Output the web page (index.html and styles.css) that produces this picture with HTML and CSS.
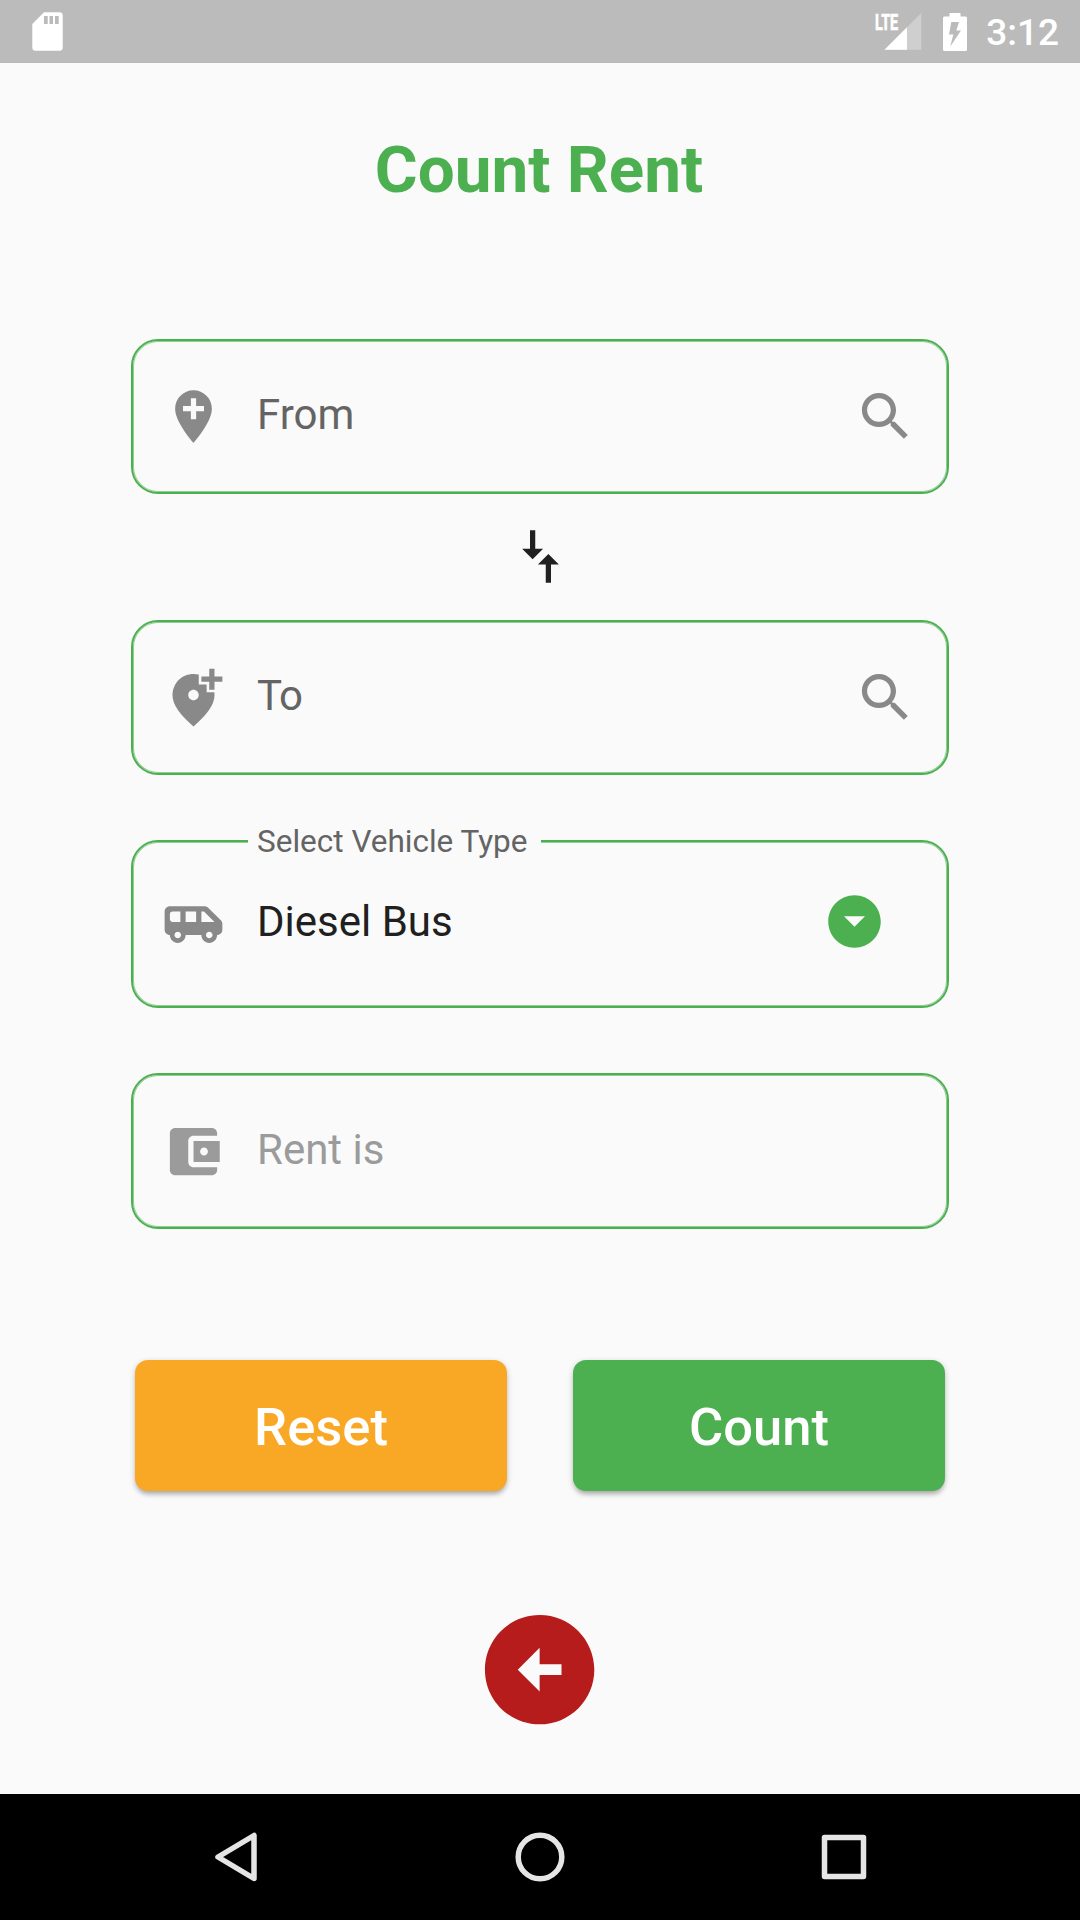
FILE: index.html
```html
<!DOCTYPE html>
<html lang="en">
<head>
<meta charset="utf-8">
<title>Count Rent</title>
<link rel="stylesheet" href="styles.css">
</head>
<body>
<div class="screen">
  <header class="status-bar">
    <svg class="sd-card" viewBox="0 0 31 39"><path fill-rule="evenodd" d="M12 .3H27.500Q30.700.3 30.700 3.500V35.500Q30.700 38.700 27.500 38.700H3.500Q.3 38.700.3 35.500V12ZM12 4V12H15.700V4ZM17.500 4V12H21V4ZM23 4V12H26.700V4Z"/></svg>
    <div class="status-right">
      <div class="signal">
        <svg viewBox="0 0 38 37"><path opacity=".3" d="M37.300 0V36.700H.5Z"/><path d="M23 14.300V36.700H.5Z"/></svg>
        <span class="network">LTE</span>
      </div>
      <svg class="battery" viewBox="0 0 24 38"><path fill-rule="evenodd" d="M6.500 0H17.500V3.500H22.500Q24 3.500 24 5V36.500Q24 38 22.500 38H1.500Q0 38 0 36.500V5Q0 3.500 1.500 3.500H6.500ZM8.300 9 6 21.500H10.300L7.300 33.500 18 17.500H13.300L16 9Z"/></svg>
      <span class="clock">3:12</span>
    </div>
  </header>

  <main class="content">
    <h1 class="title">Count Rent</h1>

    <div class="field">
      <svg class="icon" viewBox="0 0 24 24"><path d="M12 2C8.140 2 5 5.140 5 9c0 5.250 7 13 7 13s7-7.750 7-13c0-3.860-3.140-7-7-7zm4 8h-3v3h-2v-3H8V8h3V5h2v3h3v2z"/></svg>
      <span class="text">From</span>
      <svg class="icon" viewBox="0 0 24 24"><path d="M15.500 14h-.79l-.28-.27C15.410 12.590 16 11.110 16 9.500 16 5.910 13.090 3 9.500 3S3 5.910 3 9.500 5.910 16 9.500 16c1.610 0 3.090-.59 4.230-1.570l.27.28v.79l5 4.990L20.490 19l-4.990-5zm-6 0C7.010 14 5 11.990 5 9.500S7.010 5 9.500 5 14 7.010 14 9.500 11.990 14 9.500 14z"/></svg>
    </div>

    <div class="swap">
      <svg class="icon dark" viewBox="0 0 24 24"><path d="M8 2h2v7h3l-4 4-4-4h3zM14 22h2v-7h3l-4-4-4 4h3z"/></svg>
    </div>

    <div class="field">
      <svg class="icon" viewBox="0 0 24 24"><path fill-rule="evenodd" d="M20 1v3h3v2h-3v3h-2V6h-3V4h3V1H20zM12 13c1.100 0 2-.9 2-2s-.9-2-2-2-2 .9-2 2S10.900 13 12 13zM14 3.250V7h3v3h2.920C19.970 10.390 20 10.790 20 11.200c0 3.320-2.670 7.250-8 11.800-5.330-4.550-8-8.480-8-11.800C4 6.220 7.800 3 12 3 12.680 3 13.350 3.080 14 3.250z"/></svg>
      <span class="text to">To</span>
      <svg class="icon" viewBox="0 0 24 24"><path d="M15.500 14h-.79l-.28-.27C15.410 12.590 16 11.110 16 9.500 16 5.910 13.090 3 9.500 3S3 5.910 3 9.500 5.910 16 9.500 16c1.610 0 3.090-.59 4.230-1.570l.27.28v.79l5 4.990L20.490 19l-4.990-5zm-6 0C7.010 14 5 11.990 5 9.500S7.010 5 9.500 5 14 7.010 14 9.500 11.990 14 9.500 14z"/></svg>
    </div>

    <div class="field select">
      <span class="floating-label">Select Vehicle Type</span>
      <svg class="icon" viewBox="0 0 24 24"><path d="M22.410 10.410l-4.830-4.830c-.37-.37-.88-.58-1.410-.58H3c-1.100 0-2 .89-2 2v7c0 1.100.9 2 2 2 0 1.660 1.340 3 3 3s3-1.340 3-3h6c0 1.660 1.340 3 3 3s3-1.340 3-3c1.100 0 2-.9 2-2v-2.170c0-.53-.21-1.040-.59-1.420zM3 10V8c0-.55.45-1 1-1h3v4H4c-.55 0-1-.45-1-1zm3 7.250c-.69 0-1.250-.56-1.250-1.250S5.310 14.750 6 14.750s1.250.56 1.250 1.250S6.690 17.250 6 17.250zM13 11H9V7h4v4zm5 6.250c-.69 0-1.250-.56-1.250-1.250s.56-1.250 1.250-1.250 1.250.56 1.250 1.250-.56 1.250-1.250 1.250zM15 11V7h1l4 4h-5z"/></svg>
      <span class="text value">Diesel Bus</span>
      <svg class="icon dropdown" viewBox="0 0 24 24"><path d="M12 2C6.480 2 2 6.480 2 12s4.480 10 10 10 10-4.480 10-10S17.520 2 12 2zm0 12l-4-4h8l-4 4z"/></svg>
    </div>

    <div class="field disabled">
      <svg class="icon" viewBox="0 0 24 24"><path d="M21 18v1c0 1.100-.9 2-2 2H5c-1.110 0-2-.9-2-2V5c0-1.100.89-2 2-2h14c1.100 0 2 .9 2 2v1h-9c-1.110 0-2 .9-2 2v8c0 1.100.89 2 2 2h9zm-9-2h10V8H12v8zm4-2.500c-.83 0-1.500-.67-1.500-1.500s.67-1.500 1.500-1.500 1.500.67 1.500 1.500-.67 1.500-1.500 1.500z"/></svg>
      <span class="text">Rent is</span>
    </div>

    <div class="actions">
      <button class="button reset">Reset</button>
      <button class="button count">Count</button>
    </div>

    <svg class="back" viewBox="0 0 24 24"><path d="M12 2C6.480 2 2 6.480 2 12s4.480 10 10 10 10-4.480 10-10S17.520 2 12 2zM12 8v3h4v2h-4v3l-4-4z"/></svg>
  </main>

  <nav class="nav-bar">
    <svg viewBox="0 0 60 60"><path d="M44 8.500V51.500L8 30Z"/></svg>
    <svg viewBox="0 0 60 60"><circle cx="30" cy="30" r="21.800"/></svg>
    <svg viewBox="0 0 60 60"><rect x="14.500" y="10.500" width="39" height="39"/></svg>
  </nav>
</div>
</body>
</html>
```
FILE: styles.css
```css
* { box-sizing: border-box; }

body {
  margin: 0;
  font-family: Roboto, "Liberation Sans", sans-serif;
  background: #fafafa;
}

.screen {
  width: 1080px;
  height: 1920px;
  display: flex;
  flex-direction: column;
  overflow: hidden;
}

.status-bar {
  height: 63px;
  flex: none;
  background: #bbb;
  display: flex;
  align-items: center;
  justify-content: space-between;
  padding: 0 21px 0 32px;
  color: #fff;
  fill: #fff;
}

.sd-card { width: 31px; height: 39px; }

.status-right { display: flex; align-items: center; }

.signal { position: relative; width: 38px; height: 37px; margin-right: 21px; }
.signal svg { display: block; width: 38px; height: 37px; }

.network {
  position: absolute;
  left: -9px;
  top: -2px;
  font-size: 22.500px;
  line-height: 22px;
  font-weight: 700;
  -webkit-text-stroke: .7px #fff;
  transform: scaleX(.64);
  transform-origin: 0 0;
}

.battery { width: 24px; height: 38px; margin-right: 19px; }

.clock { font-size: 37px; line-height: 44px; font-weight: 500; margin-top: 3px; }

.content {
  flex: 1;
  display: flex;
  flex-direction: column;
  align-items: center;
}

.title {
  margin: 68px 0 131px;
  padding-right: 2px;
  font-size: 65.6px;
  line-height: 77px;
  font-weight: 700;
  color: #4caf50;
}

.field {
  position: relative;
  width: 818px;
  height: 155px;
  flex: none;
  display: flex;
  align-items: center;
  gap: 32px;
  padding: 0 30px 0 29px;
  border: 2px solid #4caf50;
  box-shadow: inset 0 0 0 1px rgba(76, 175, 80, .6);
  border-radius: 27px;
}

.icon { display: block; width: 63px; height: 63px; flex: none; fill: #898989; }
.icon.dark { fill: #202020; }

.text {
  flex: 1;
  font-size: 42px;
  line-height: 50px;
  color: #646464;
  margin-bottom: 3px;
}

.text.to { letter-spacing: -1px; }
.text.value { color: #202020; margin-bottom: 5px; }

.swap { height: 126px; flex: none; display: flex; align-items: center; padding-bottom: 2px; }

.select { height: 168px; margin: 65px 0; padding-right: 61px; }

.floating-label {
  position: absolute;
  left: 115px;
  top: -20px;
  width: 293px;
  padding-left: 9px;
  background: #fafafa;
  font-size: 31.500px;
  line-height: 40px;
  color: #646464;
  white-space: nowrap;
}

.icon.dropdown { fill: #4caf50; margin-bottom: 5px; }

.disabled { height: 156px; }
.disabled .icon { fill: #9b9b9b; }
.disabled .text { color: #9b9b9b; }

.actions {
  display: flex;
  gap: 66px;
  margin-top: 131px;
  flex: none;
}

.button {
  width: 372px;
  height: 131px;
  padding: 2px 0 0;
  border: 0;
  border-radius: 13px;
  font-family: inherit;
  font-size: 52.500px;
  font-weight: 500;
  color: #fff;
  box-shadow: 0 5px 5px -2px rgba(0, 0, 0, .2), 0 2px 6px rgba(0, 0, 0, .2);
}

.reset { background: #f9a825; }
.count { background: #4caf50; }

.back { width: 131.250px; height: 131.250px; margin-top: 112.500px; flex: none; fill: #b71c1c; }

.nav-bar {
  height: 126px;
  flex: none;
  background: #000;
  display: flex;
  align-items: center;
  justify-content: space-between;
  padding: 0 210px;
}

.nav-bar svg {
  width: 60px;
  height: 60px;
  fill: none;
  stroke: #e5e5e5;
  stroke-width: 5.500;
  stroke-linejoin: round;
}
```
